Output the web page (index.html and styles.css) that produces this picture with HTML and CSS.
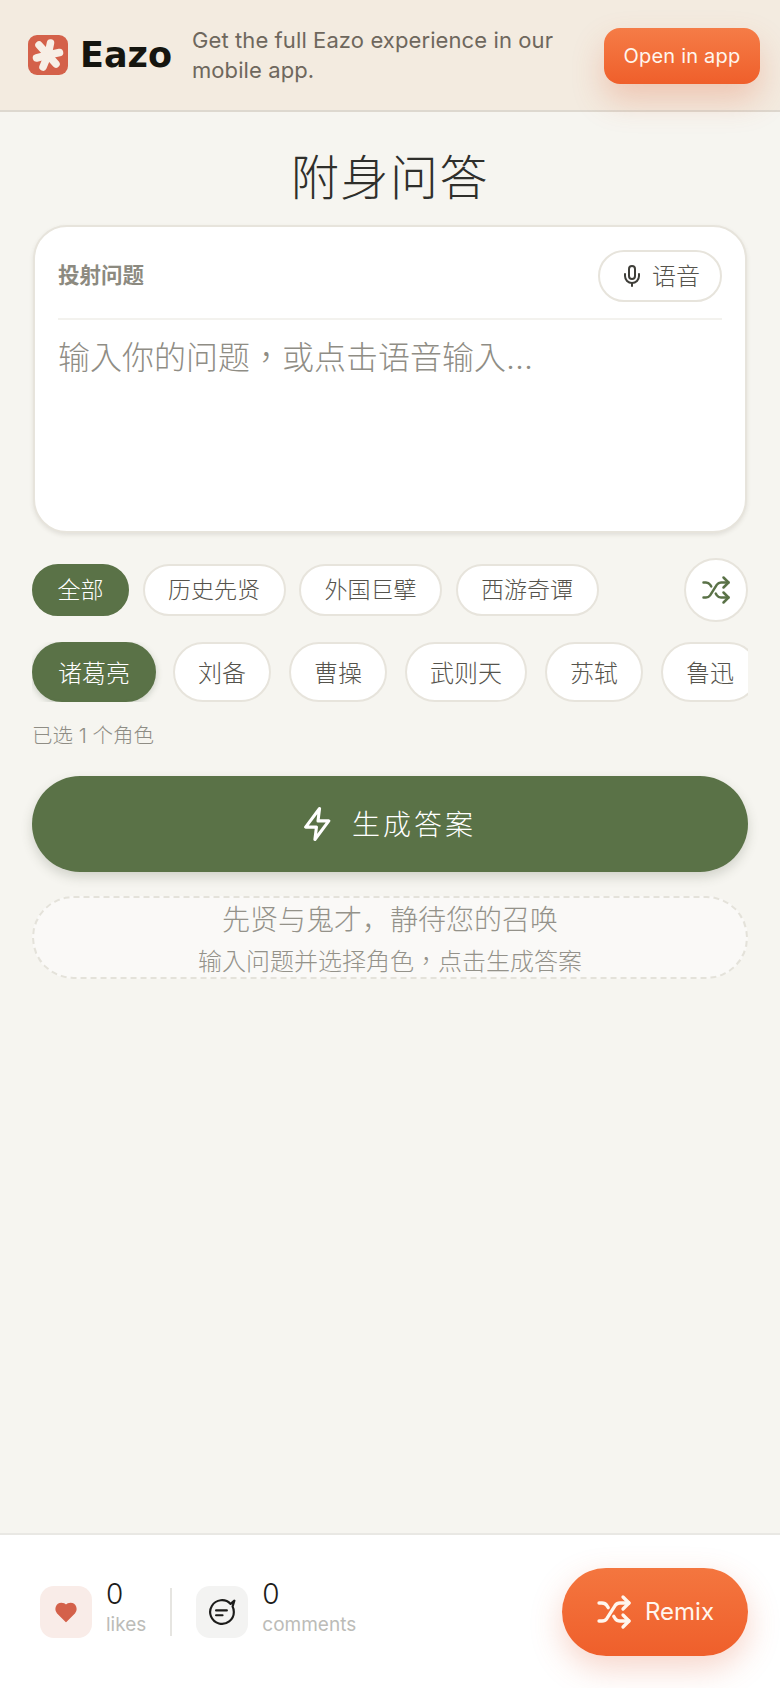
FILE: index.html
```html
<!DOCTYPE html>
<html lang="zh-CN">
<head>
    <meta charset="UTF-8">
    <meta name="viewport" content="width=device-width, initial-scale=1.0">
    <title>附身问答</title>
    <link rel="stylesheet" href="styles.css">
</head>
<body>
    <div class="banner">
        <div class="brand">
            <svg class="brand-icon" viewBox="0 0 40 40">
                <rect width="40" height="40" rx="9" fill="#d4614a"/>
                <g stroke="#f7efe6" stroke-width="7.5" stroke-linecap="round">
                    <path d="M20 20 L22.5 8"/>
                    <path d="M20 20 L31.5 17.5"/>
                    <path d="M20 20 L28 29"/>
                    <path d="M20 20 L15 32"/>
                    <path d="M20 20 L8.5 23"/>
                    <path d="M20 20 L11 10"/>
                </g>
            </svg>
            <span class="brand-name">Eazo</span>
        </div>
        <p class="banner-text">Get the full Eazo experience in our mobile app.</p>
        <button class="open-btn">Open in app</button>
    </div>

    <main class="page">
        <h1>附身问答</h1>

        <section class="question-card">
            <div class="card-head">
                <span class="card-label">投射问题</span>
                <button class="voice-btn">
                    <svg class="icon-mic" viewBox="0 0 24 24">
                        <path d="M12 2a3 3 0 0 0-3 3v7a3 3 0 0 0 6 0V5a3 3 0 0 0-3-3Z"/>
                        <path d="M19 10v2a7 7 0 0 1-14 0v-2"/>
                        <path d="M12 19v3"/>
                    </svg>
                    <span class="btn-label">语音</span>
                </button>
            </div>
            <textarea class="question-input" lang="zh-TW" placeholder="输入你的问题&#65292;或点击语音输入..."></textarea>
        </section>

        <div class="tabs">
            <button class="tab active">全部</button>
            <button class="tab">历史先贤</button>
            <button class="tab">外国巨擘</button>
            <button class="tab">西游奇谭</button>
            <button class="shuffle-btn">
                <svg class="icon-shuffle" viewBox="0 0 24 24">
                    <path d="m18 14 4 4-4 4"/>
                    <path d="m18 2 4 4-4 4"/>
                    <path d="M2 18h1.97a4 4 0 0 0 3.3-1.7l5.46-8.6a4 4 0 0 1 3.3-1.7H22"/>
                    <path d="M2 6h1.97a4 4 0 0 1 3.3 1.7l.9 1.4"/>
                    <path d="M22 18h-5.97a4 4 0 0 1-3.3-1.7l-.9-1.4"/>
                </svg>
            </button>
        </div>

        <div class="characters">
            <button class="character active">诸葛亮</button>
            <button class="character">刘备</button>
            <button class="character">曹操</button>
            <button class="character">武则天</button>
            <button class="character">苏轼</button>
            <button class="character">鲁迅</button>
        </div>

        <p class="selected-count">已选 1 个角色</p>

        <button class="generate-btn">
            <svg class="icon-zap" viewBox="3 1 18 22">
                <path d="M13 2 4 14h7l-1 8 9-12h-7l1-8Z"/>
            </svg>
            <span class="generate-label">生成答案</span>
        </button>

        <div class="empty-box">
            <p class="empty-title">先贤与鬼才&#65292;静待您的召唤</p>
            <p class="empty-hint" lang="zh-TW">输入问题并选择角色&#65292;点击生成答案</p>
        </div>
    </main>

    <footer class="footer">
        <div class="stat">
            <div class="stat-tile tile-like">
                <svg class="icon-heart" viewBox="0 0 24 24">
                    <path d="M12 22 3 13C0 9.500 1.500 3 7 3c2.200 0 3.800.8 5 2 1.200-1.200 2.800-2 5-2 5.500 0 7 6.500 4 10Z"/>
                </svg>
            </div>
            <div class="stat-text">
                <span class="stat-num">0</span>
                <span class="stat-name">likes</span>
            </div>
        </div>
        <div class="stat-divider"></div>
        <div class="stat">
            <div class="stat-tile tile-comment">
                <svg class="icon-comment" viewBox="0 0 26 26">
                    <path d="M21 5.500A11 11 0 1 0 24 13c0-1.800-.4-3.500-1.200-5L24.500 2.500Z"/>
                    <path d="M7.500 11.500h10"/>
                    <path d="M7.500 16h6"/>
                </svg>
            </div>
            <div class="stat-text">
                <span class="stat-num">0</span>
                <span class="stat-name">comments</span>
            </div>
        </div>
        <button class="remix-btn">
            <svg class="icon-shuffle" viewBox="0 0 24 24">
                <path d="m18 14 4 4-4 4"/>
                <path d="m18 2 4 4-4 4"/>
                <path d="M2 18h1.97a4 4 0 0 0 3.3-1.7l5.46-8.6a4 4 0 0 1 3.3-1.7H22"/>
                <path d="M2 6h1.97a4 4 0 0 1 3.3 1.7l.9 1.4"/>
                <path d="M22 18h-5.97a4 4 0 0 1-3.3-1.7l-.9-1.4"/>
            </svg>
            Remix
        </button>
    </footer>
</body>
</html>
```

FILE: styles.css
```css
* {
    margin: 0;
    padding: 0;
    box-sizing: border-box;
}

body {
    font-family: Inter, "Noto Sans CJK SC", sans-serif;
    background: #f6f5f0;
    color: #3a3a36;
    width: 780px;
    min-height: 100vh;
    display: flex;
    flex-direction: column;
}

button {
    font-family: inherit;
    cursor: pointer;
}

svg {
    fill: none;
    stroke: currentColor;
    stroke-linecap: round;
    stroke-linejoin: round;
    stroke-width: 2;
}

/* top banner */
.banner {
    height: 112px;
    background: #f3ebe0;
    border-bottom: 2px solid #ddd8cf;
    padding: 0 20px 0 28px;
    display: flex;
    align-items: center;
    position: relative;
    z-index: 1;
}

.brand {
    display: flex;
    align-items: center;
    gap: 12px;
    margin-right: 20px;
}

.brand-icon {
    width: 40px;
    height: 40px;
    stroke: none;
}

.brand-name {
    font-family: "DejaVu Sans", sans-serif;
    font-size: 35px;
    font-weight: 700;
    color: #15150f;
}

.banner-text {
    width: 372px;
    font-size: 22px;
    line-height: 30px;
    color: #6e675d;
    letter-spacing: 0.1px;
}

.open-btn {
    width: 156px;
    height: 56px;
    margin-left: auto;
    margin-top: 2px;
    border: none;
    border-radius: 16px;
    background: linear-gradient(#f57c47, #ef5f2b);
    color: #fff6ee;
    font-size: 20px;
    letter-spacing: 0.2px;
    box-shadow: 0 16px 32px rgba(224, 92, 50, 0.26);
}

/* main column */
.page {
    flex: 1;
    padding: 0 32px;
}

h1 {
    font-size: 48px;
    font-weight: 300;
    line-height: 64px;
    letter-spacing: 1.5px;
    color: #2f2f2b;
    text-align: center;
    padding-top: 34px;
    padding-bottom: 15px;
}

.question-card {
    height: 308px;
    margin: 0 1px;
    padding: 23px 23px 0;
    background: #fff;
    border: 2px solid #e7e4dc;
    border-radius: 34px;
    box-shadow: 0 2px 4px rgba(80, 75, 60, 0.12);
    display: flex;
    flex-direction: column;
}

.card-head {
    height: 70px;
    flex-shrink: 0;
    display: flex;
    align-items: flex-start;
    justify-content: space-between;
    border-bottom: 2px solid #f3f2ee;
}

.card-label {
    font-size: 21.5px;
    font-weight: 700;
    line-height: 50px;
    color: #8c8a80;
}

.voice-btn {
    width: 124px;
    height: 52px;
    background: #fff;
    border: 2px solid #e7e4dc;
    border-radius: 26px;
    color: #55534c;
    font-family: "Noto Sans CJK SC", sans-serif;
    font-size: 24px;
    font-weight: 300;
    display: flex;
    align-items: center;
    justify-content: center;
    gap: 8px;
}

.btn-label {
    margin-bottom: 4px;
}

.icon-mic {
    width: 24px;
    height: 24px;
    color: #3f3e39;
}

.question-input {
    flex: 1;
    border: none;
    outline: none;
    resize: none;
    padding-top: 16px;
    font-family: Inter, "Noto Sans CJK TC", sans-serif;
    font-size: 32px;
    font-weight: 300;
    line-height: 44px;
    background: transparent;
}

.question-input::placeholder {
    color: #8f8d85;
    opacity: 1;
}

/* filter tabs */
.tabs {
    display: flex;
    align-items: center;
    gap: 13.5px;
    margin-top: 25px;
}

.tab {
    height: 52px;
    padding: 0 23.5px 4px;
    background: #fff;
    border: 2px solid #e7e4dc;
    border-radius: 26px;
    color: #55534c;
    font-family: "Noto Sans CJK SC", sans-serif;
    font-size: 23px;
    font-weight: 300;
}

.tab.active, .character.active {
    background: #5a7247;
    border-color: #5a7247;
    color: #fff;
}

.shuffle-btn {
    width: 64px;
    height: 64px;
    margin-left: auto;
    background: #fff;
    border: 2px solid #e7e4dc;
    border-radius: 50%;
    color: #5a7247;
    display: flex;
    align-items: center;
    justify-content: center;
}

.icon-shuffle {
    width: 30px;
    height: 30px;
}

/* character row, the last one is cut by the edge */
.characters {
    display: flex;
    gap: 18px;
    margin-top: 20px;
    overflow: hidden;
}

.character {
    flex-shrink: 0;
    height: 60px;
    padding: 0 23px 2px;
    background: #fff;
    border: 2px solid #e7e4dc;
    border-radius: 30px;
    color: #55534c;
    font-family: "Noto Sans CJK SC", sans-serif;
    font-size: 24px;
    font-weight: 300;
}

.character.active {
    padding: 0 24px 2px;
    margin-right: -1px;
    box-shadow: 0 2px 6px rgba(60, 80, 50, 0.25);
}

.selected-count {
    margin-top: 19px;
    font-size: 20.5px;
    font-weight: 300;
    line-height: 30px;
    color: #8f8d85;
}

.generate-btn {
    width: 100%;
    height: 96px;
    margin-top: 25px;
    border: none;
    border-radius: 48px;
    background: #5a7247;
    color: #fff;
    font-family: "Noto Sans CJK SC", sans-serif;
    font-size: 28px;
    font-weight: 300;
    letter-spacing: 3px;
    box-shadow: 0 5px 12px rgba(60, 70, 50, 0.2);
    display: flex;
    align-items: center;
    justify-content: center;
    gap: 20px;
}

.generate-label {
    margin-bottom: 2px;
}

.icon-zap {
    width: 28px;
    height: 34px;
}

.empty-box {
    margin-top: 24px;
    padding-top: 5px;
    background: #faf9f7;
    border: 2px dashed #e4e2da;
    border-radius: 42px;
    text-align: center;
}

.empty-title {
    font-size: 28px;
    line-height: 34px;
    font-weight: 300;
    color: #94928a;
}

.empty-hint {
    margin-top: 10px;
    font-family: Inter, "Noto Sans CJK TC", sans-serif;
    font-size: 24px;
    line-height: 30px;
    font-weight: 300;
    color: #94928a;
}

/* bottom bar */
.footer {
    height: 155px;
    padding: 0 32px 0 40px;
    background: #fff;
    border-top: 2px solid #e9e8e4;
    display: flex;
    align-items: center;
}

.stat {
    display: flex;
    align-items: center;
    gap: 14px;
}

.stat-tile {
    width: 52px;
    height: 52px;
    border-radius: 14px;
    display: flex;
    align-items: center;
    justify-content: center;
}

.tile-like {
    background: #f9ece8;
}

.tile-comment {
    background: #f3f3f2;
    color: #1c1c1a;
}

.icon-heart {
    width: 22px;
    height: 22px;
    fill: #d4614a;
    stroke: #d4614a;
}

.icon-comment {
    width: 28px;
    height: 28px;
}

.stat-text {
    display: flex;
    flex-direction: column;
    padding-bottom: 7px;
}

.stat-num {
    font-size: 28px;
    font-weight: 300;
    line-height: 34px;
    color: #1c1c1a;
}

.stat-name {
    font-size: 19px;
    line-height: 28px;
    color: #bcbcb8;
}

.stat-divider {
    width: 2px;
    height: 48px;
    margin: 0 24px;
    background: #e6e5e1;
}

.remix-btn {
    width: 186px;
    height: 88px;
    margin-left: auto;
    border: none;
    border-radius: 44px;
    background: linear-gradient(#f4763f, #ef5f2b);
    color: #fff6ee;
    font-size: 24px;
    box-shadow: 0 12px 32px rgba(224, 92, 50, 0.26);
    display: flex;
    align-items: center;
    justify-content: center;
    gap: 13px;
}

.remix-btn .icon-shuffle {
    width: 36px;
    height: 36px;
    stroke-width: 2.2;
}
```
